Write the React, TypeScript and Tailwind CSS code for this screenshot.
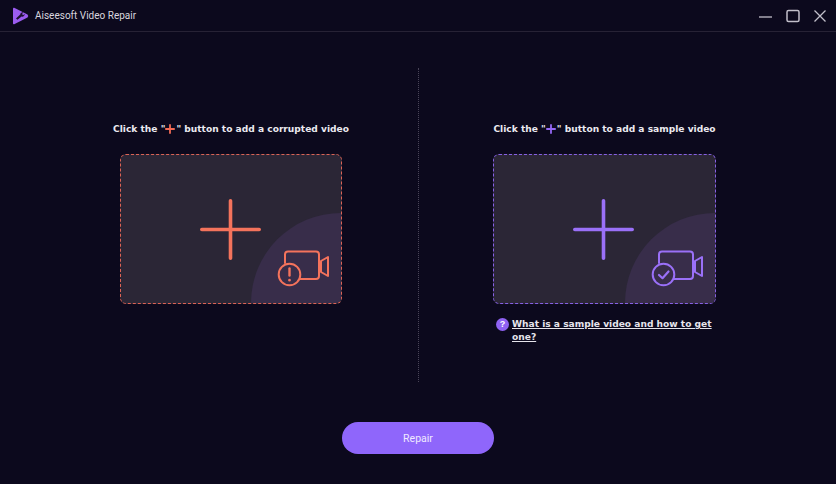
import React from "react";

function Plus({ color, size, stroke }: { color: string; size: number; stroke: number }) {
  const m = size / 2;
  const e = stroke / 2;
  return (
    <svg width={size} height={size} viewBox={`0 0 ${size} ${size}`} fill="none" stroke={color} strokeWidth={stroke} strokeLinecap="round" className="block">
      <path d={`M${m} ${e}V${size - e}M${e} ${m}H${size - e}`} />
    </svg>
  );
}

function Camera({ color, kind }: { color: string; kind: "alert" | "check" }) {
  return (
    <svg width="52" height="38" viewBox="0 0 52 38" fill="none" stroke={color} strokeWidth="2" strokeLinecap="round" strokeLinejoin="round">
      <path d="M8 13V4.5Q8 1.5 11 1.5H39Q42 1.5 42 4.5V26Q42 29 39 29H23" />
      <path d="M44 11L51 7V26L44 22Z" />
      <circle cx="12.5" cy="24.5" r="10.8" />
      {kind === "alert" ? (
        <g>
          <path d="M12.5 18.5V25.5" strokeWidth="2.4" />
          <path d="M12.5 30V30.2" strokeWidth="2.6" />
        </g>
      ) : (
        <path d="M8 25L11.5 28.2L17.5 21.5" strokeWidth="2.2" />
      )}
    </svg>
  );
}

function Card({ color, borderClass, kind, widthClass, plusClass, camClass }: { color: string; borderClass: string; kind: "alert" | "check"; widthClass: string; plusClass: string; camClass: string }) {
  return (
    <div className={`relative h-[150px] rounded-[6px] border border-dashed overflow-hidden bg-[#2b2636] ${widthClass} ${borderClass}`}>
      <div className="absolute right-0 bottom-0 w-[90px] h-[90px] rounded-tl-full bg-[#382d4a]" />
      <div className={`absolute top-[44px] ${plusClass}`}>
        <Plus color={color} size={61} stroke={3.6} />
      </div>
      <div className={`absolute top-[95px] ${camClass}`}>
        <Camera color={color} kind={kind} />
      </div>
    </div>
  );
}

export default function App() {
  return (
    <div className="w-[836px] h-[484px] bg-[#0c091d] flex flex-col overflow-hidden font-['Liberation_Sans',sans-serif]">
      <header className="h-[32px] shrink-0 border-b border-[#272235] flex items-center pl-[11px] pr-[9px]">
        <svg width="18" height="18" viewBox="0 0 18 18" className="mr-[6px]">
          <path d="M2 1.5Q2 0.5 3.2 0.8L16.5 7.6Q18 9 16.5 10.4L3.2 17.2Q2 17.5 2 16.5Z" fill="#9b5cf0" />
          <path d="M5 11.5L9.2 7.6A2.4 2.4 0 0 1 12.4 5.4L11 7L12.2 8.2L13.6 6.8A2.4 2.4 0 0 1 10.6 9.6L6.4 12.8Z" fill="#1d1230" />
        </svg>
        <span className="text-[10px] text-[#d9d6df] font-['Roboto',sans-serif]">Aiseesoft Video Repair</span>
        <div className="ml-auto flex items-center gap-[13px]">
          <svg width="14" height="14" viewBox="0 0 14 14" stroke="#c2bfca" strokeWidth="1.3" fill="none"><path d="M0 8H13" /></svg>
          <svg width="14" height="14" viewBox="0 0 14 14" stroke="#c2bfca" strokeWidth="1.5" fill="none"><rect x="1" y="1.5" width="12" height="11" rx="1.5" /></svg>
          <svg width="14" height="14" viewBox="0 0 14 14" stroke="#c2bfca" strokeWidth="1.3" fill="none"><path d="M1.5 1.5L12.5 12.5M12.5 1.5L1.5 12.5" /></svg>
        </div>
      </header>
      <main className="flex-1 flex flex-col">
        <div className="flex h-[314px] mt-[36px]">
          <section className="w-[419px] pl-[112px] border-r border-dotted border-[#4a4558] pt-[53px]">
            <div className="w-[238px] h-[18px] flex items-center justify-center whitespace-nowrap text-[9.1px] font-bold text-[#ebe9f0] font-['DejaVu_Sans',sans-serif]">
              <span>Click the "</span>
              <span className="mr-[1px] mb-[2px]"><Plus color="#f26b55" size={10} stroke={1.8} /></span>
              <span>" button to add a corrupted video</span>
            </div>
            <div className="mt-[15px] ml-[8px]">
              <Card color="#f4735c" borderClass="border-[#dc6355]" kind="alert" widthClass="w-[222px]" plusClass="left-[79px]" camClass="left-[156px]" />
            </div>
          </section>
          <section className="flex-1 pl-[74px] pt-[53px]">
            <div className="w-[223px] h-[18px] flex items-center justify-center whitespace-nowrap text-[9.1px] font-bold text-[#ebe9f0] font-['DejaVu_Sans',sans-serif]">
              <span>Click the "</span>
              <span className="mr-[1px] mb-[2px]"><Plus color="#9468f5" size={10} stroke={1.8} /></span>
              <span>" button to add a sample video</span>
            </div>
            <div className="mt-[15px]">
              <Card color="#9a70f8" borderClass="border-[#8660e4]" kind="check" widthClass="w-[223px]" plusClass="left-[79px]" camClass="left-[157px]" />
            </div>
            <div className="mt-[14px] ml-[3px] flex items-start w-[222px]">
              <span className="w-[13px] h-[13px] shrink-0 rounded-full bg-[#8f62f2] text-[9px] leading-[13px] font-bold text-white text-center">?</span>
              <a className="ml-[3px] text-[9.1px] leading-[13px] font-bold underline text-[#e6e4ec] font-['DejaVu_Sans',sans-serif]">What is a sample video and how to get one?</a>
            </div>
          </section>
        </div>
        <div className="flex justify-center mt-[40px]">
          <button className="w-[152px] h-[32px] pt-[1px] rounded-full bg-[#8f66fb] text-[10.5px] text-[#efe9ff] font-['Roboto',sans-serif]">Repair</button>
        </div>
      </main>
    </div>
  );
}
